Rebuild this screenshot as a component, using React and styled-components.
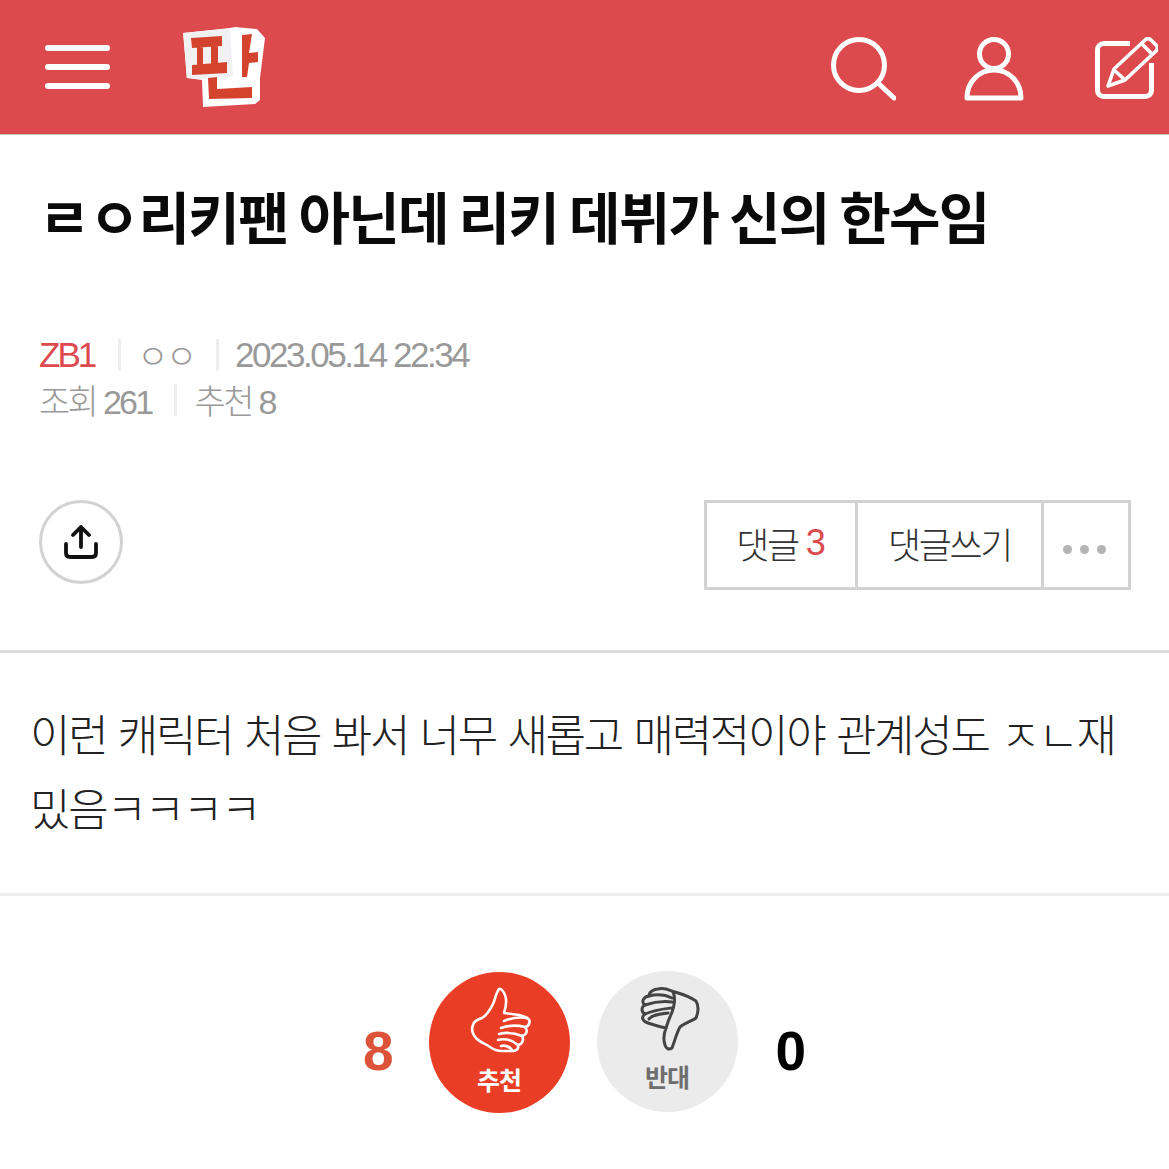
import React from 'react';
import styled, { createGlobalStyle } from 'styled-components';

const GlobalStyle = createGlobalStyle`
  html, body {
    margin: 0;
    padding: 0;
    background: #fff;
  }
  body {
    font-family: "Liberation Sans", "Noto Sans CJK KR", sans-serif;
  }
`;

const Page = styled.div`
  width: 1169px;
  height: 1169px;
  overflow: hidden;
  background: #fff;
`;

const Header = styled.header`
  height: 134px;
  background: #dc4a4d;
  border-bottom: 1px solid #c9c5c5;
  display: flex;
  align-items: center;
  padding: 0 11px 0 45px;
`;

const Burger = styled.div`
  width: 65px;
  display: flex;
  flex-direction: column;
  gap: 13.5px;
  margin-right: 73px;
  span {
    display: block;
    height: 5.5px;
    border-radius: 3px;
    background: #fff;
  }
`;

const Logo = styled.svg`
  width: 88px;
  height: 84px;
  margin-top: 2px;
`;

const HeaderIcons = styled.div`
  margin-left: auto;
  margin-top: 4px;
  display: flex;
  align-items: center;
  gap: 68px;
  svg {
    display: block;
  }
`;

const Title = styled.h1`
  margin: 0;
  padding: 44px 0 0 39px;
  height: 124px;
  box-sizing: border-box;
  font-family: "Noto Sans CJK KR", sans-serif;
  font-size: 56px;
  line-height: 72px;
  font-weight: 700;
  letter-spacing: -1.8px;
  color: #0a0a0a;
  white-space: nowrap;
`;

const Meta = styled.div`
  padding: 73px 0 0 39px;
  height: 241px;
  box-sizing: border-box;
`;

const MetaRow = styled.div`
  display: flex;
  align-items: center;
  height: 45px;
  font-size: ${(p) => p.$size}px;
  letter-spacing: ${(p) => p.$track}px;
  color: #999;
`;

const MetaItem = styled.span`
  color: ${(p) => (p.$red ? '#dc4a4d' : '#999')};
  font-weight: 300;
  white-space: pre;
`;

const Nick = styled(MetaItem)`
  font-size: 34px;
`;

const Board = styled(MetaItem)`
  letter-spacing: -3px;
`;

const Sep = styled.i`
  display: block;
  width: 3px;
  height: 32px;
  background: #eee;
  margin: 0 ${(p) => p.$right}px 0 ${(p) => p.$left}px;
`;

const Actions = styled.div`
  display: flex;
  justify-content: space-between;
  align-items: flex-start;
  padding: 0 38px 0 39px;
  height: 150px;
  border-bottom: 3px solid #dcdcdc;
`;

const ShareButton = styled.div`
  width: 84px;
  height: 84px;
  box-sizing: border-box;
  border: 3px solid #d2d2d2;
  border-radius: 50%;
  display: flex;
  align-items: center;
  justify-content: center;
`;

const ButtonGroup = styled.div`
  display: flex;
  height: 90px;
  box-sizing: border-box;
  border: 3px solid #d2d2d2;
`;

const GroupCell = styled.div`
  width: ${(p) => p.$w}px;
  box-sizing: border-box;
  display: flex;
  align-items: center;
  justify-content: center;
  gap: 8px;
  padding-bottom: 4px;
  font-size: 36px;
  letter-spacing: -2.4px;
  color: #333;
  font-weight: 300;
  & + & {
    border-left: 3px solid #d2d2d2;
  }
  b {
    font-weight: 400;
    color: #dc4a4d;
    letter-spacing: 0;
  }
`;

const Dots = styled.div`
  display: flex;
  gap: 8px;
  margin: 12px 4px 0 0;
  i {
    display: block;
    width: 9px;
    height: 9px;
    border-radius: 50%;
    background: #b4b4b4;
  }
`;

const Body = styled.div`
  height: 243px;
  box-sizing: border-box;
  padding: 43px 0 0 30px;
  font-family: "Noto Sans CJK KR", sans-serif;
  font-size: 44px;
  line-height: 74px;
  font-weight: 300;
  letter-spacing: -2.28px;
  word-spacing: 4px;
  color: #222;
  border-bottom: 3px solid #eee;
  white-space: nowrap;
`;

const Votes = styled.div`
  display: flex;
  align-items: center;
  padding: 76px 0 0 363px;
`;

const Count = styled.span`
  font-size: 55px;
  font-weight: 700;
  line-height: 1;
  color: ${(p) => (p.$red ? '#dd5339' : '#000')};
  margin-top: 18px;
  margin-left: ${(p) => p.$ml || 0}px;
`;

const VoteCircle = styled.div`
  width: 141px;
  height: 141px;
  border-radius: 50%;
  background: ${(p) => (p.$up ? '#e93e25' : '#ebebeb')};
  color: ${(p) => (p.$up ? '#fff' : '#6e6e6e')};
  display: flex;
  flex-direction: column;
  align-items: center;
  margin-left: ${(p) => p.$ml}px;
  margin-top: ${(p) => p.$mt || 0}px;
  padding-top: ${(p) => p.$pt}px;
  box-sizing: border-box;
  span {
    font-family: "Noto Sans CJK KR", sans-serif;
    font-size: 25px;
    line-height: 30px;
    font-weight: 700;
    letter-spacing: -1px;
    margin-top: ${(p) => p.$gap}px;
  }
`;

const ThumbUp = () => (
  <svg width="80" height="80" viewBox="0 0 80 80" fill="none" stroke="#fff" strokeWidth="2.6" strokeLinecap="round" strokeLinejoin="round">
    <path d="M40 9C37 13 36 20 34 24C31 30 28 35 23 38C18 40 15 41 14 45C12 50 14 55 18 59C22 63 27 64 31 67C35 70 38 71 43 71L54 71C58 71 60 68 59 65C64 64 65 59 63 56C68 55 69 50 66 47C71 46 72 40 68 38C66 36 63 36 60 35L45 33C47 27 48 20 46 15C45 12 42 8 40 9Z" />
    <path d="M45 41C52 38 61 37 68 38M42 48C50 45 58 45 66 47M40 54C48 52 56 53 63 56M39 60C46 58 53 60 59 65M42 66C46 65 50 66 53 70" />
  </svg>
);

const ThumbDown = () => (
  <svg width="80" height="80" viewBox="0 0 80 80" fill="none" stroke="#444" strokeWidth="3" strokeLinecap="round" strokeLinejoin="round" style={{ marginLeft: 5 }}>
    <path d="M28 9C35 7 41 11 45 12C52 14 60 17 66 21C69 26 68 33 66 38C62 41 55 43 50 47C47 52 45 60 42 68C39 70 36 69 35 65C33 59 34 53 36 48C30 47 24 45 18 43C12 41 11 37 15 34C11 32 11 27 15 25C11 22 13 17 19 16C19 12 24 9 28 9Z" />
    <path d="M19 16C27 14 36 15 42 18M15 25C24 22 34 21 42 22M15 34C24 30 33 29 41 28M19 39C22 35 28 34 38 33M43 12C46 18 44 28 40 37C38 41 37 45 36 48" />
  </svg>
);

export default function App() {
  return (
    <Page>
      <GlobalStyle />
      <Header>
        <Burger>
          <span />
          <span />
          <span />
        </Burger>
        <Logo viewBox="0 0 88 84">
          <path d="M52 1L74 3L82 12L77 52L77 74L72 78L20 81L19 54L4 52L0 7L47 2z" fill="#fff" />
          <path d="M0.5 7L47 2.5L50 50L20 53L3.7 52z" fill="#f1f1f3" />
          <g fill="#d4432e">
            <path d="M8 12L39 10L39 20L9 22zM9 39L44 36L44 47L9 49zM14 21L20 21L20 40L14 40zM28 20L35 20L35 38L28 38z" />
            <path d="M59 9L69 8L66 27L75 26L75 36L66 37L64 51L59 51z" />
            <path d="M25 52L34 51L34 63L69 61L69 72L26 73z" />
          </g>
        </Logo>
        <HeaderIcons>
          <svg width="66" height="66" viewBox="0 0 66 66" fill="none" stroke="#fff" strokeWidth="5" strokeLinecap="round">
            <circle cx="29" cy="29" r="25.5" />
            <path d="M48 47l16 15" />
          </svg>
          <svg width="60" height="64" viewBox="0 0 60 64" fill="none" stroke="#fff" strokeWidth="5" strokeLinejoin="round">
            <circle cx="30" cy="17" r="14.5" />
            <path d="M3 61c0-16 12-28 27-28s27 12 27 28z" />
          </svg>
          <svg width="64" height="64" viewBox="0 0 64 64" fill="none" stroke="#fff" strokeWidth="5" strokeLinejoin="round" style={{ marginLeft: 2 }}>
            <path d="M36 6.500H10c-4 0-6.500 3-6.500 6.500v40c0 4 2.500 6.500 6.500 6.500h41c4 0 6.500-2.500 6.500-6.500V26" />
            <path d="M14 49L20 32L51 3c2-2 4-2 6 0l5 5c2 2 2 4 0 6L31 43zM20 33L30 42M48 7L57 16" strokeWidth="3.6" strokeLinecap="round" />
          </svg>
        </HeaderIcons>
      </Header>

      <Title>ㄹㅇ리키팬 아닌데 리키 데뷔가 신의 한수임</Title>

      <Meta>
        <MetaRow $size={35} $track={-2.44}>
          <Board $red>ZB1</Board>
          <Sep $left={24} $right={16} />
          <Nick>ㅇㅇ</Nick>
          <Sep $left={21} $right={16} />
          <MetaItem>2023.05.14 22:34</MetaItem>
        </MetaRow>
        <MetaRow $size={34} $track={-2.7}>
          <MetaItem>조회 261</MetaItem>
          <Sep $left={22} $right={18} />
          <MetaItem>추천 8</MetaItem>
        </MetaRow>
      </Meta>

      <Actions>
        <ShareButton>
          <svg width="36" height="34" viewBox="0 0 36 34" fill="none" stroke="#111" strokeWidth="3.8" strokeLinecap="round" strokeLinejoin="round">
            <path d="M18 22V3M10 10l8-8 8 8M3 19v9c0 2 1 4 4 4h22c3 0 4-2 4-4V19" />
          </svg>
        </ShareButton>
        <ButtonGroup>
          <GroupCell $w={148}>
            댓글<b>3</b>
          </GroupCell>
          <GroupCell $w={186}>댓글쓰기</GroupCell>
          <GroupCell $w={87}>
            <Dots>
              <i />
              <i />
              <i />
            </Dots>
          </GroupCell>
        </ButtonGroup>
      </Actions>

      <Body>
        이런 캐릭터 처음 봐서 너무 새롭고 매력적이야 관계성도 ㅈㄴ재
        <br />
        밌음ㅋㅋㅋㅋ
      </Body>

      <Votes>
        <Count $red>8</Count>
        <VoteCircle $up $ml={35} $pt={8} $gap={4}>
          <ThumbUp />
          <span>추천</span>
        </VoteCircle>
        <VoteCircle $ml={27} $mt={-2} $pt={9} $gap={1}>
          <ThumbDown />
          <span>반대</span>
        </VoteCircle>
        <Count $ml={38}>0</Count>
      </Votes>
    </Page>
  );
}
